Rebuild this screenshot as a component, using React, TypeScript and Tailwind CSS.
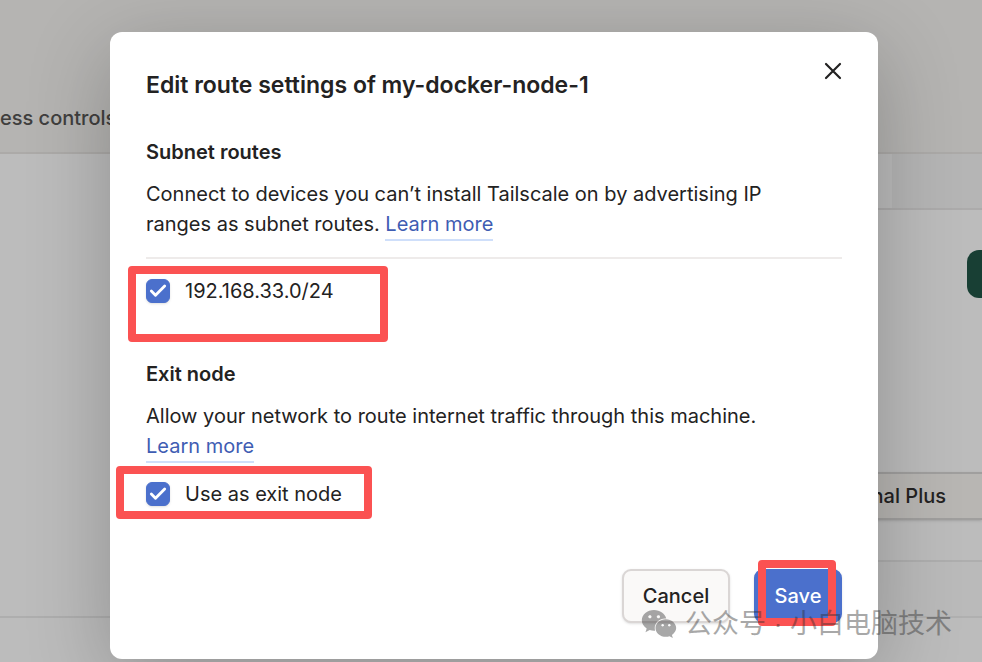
import type { ReactNode } from "react";
import { Check } from "lucide-react";
import { FaWeixin } from "react-icons/fa";

function Highlight({ className }: { className: string }) {
  return (
    <div
      aria-hidden="true"
      className={`pointer-events-none absolute rounded-[4px] border-8 border-[#fb5252] ${className}`}
    />
  );
}

function LearnMore() {
  return (
    <a
      href="#learn-more"
      className="border-b-2 border-[#cfdffa] pb-[3px] whitespace-nowrap text-[#3f5db3]"
    >
      Learn more
    </a>
  );
}

function CheckRow({ id, label, children }: { id: string; label: string; children: ReactNode }) {
  return (
    <div className="relative flex items-center leading-[30px]">
      <span className="relative flex size-6">
        <input
          id={id}
          type="checkbox"
          defaultChecked
          className="peer size-6 appearance-none rounded-[6px] border border-[#4b70cc] bg-white shadow-sm checked:bg-[#4b70cc]"
        />
        <Check
          className="pointer-events-none absolute inset-0 m-auto hidden size-5 text-white peer-checked:block"
          strokeWidth={3.4}
        />
      </span>
      <label htmlFor={id} className="pl-[15px]">
        {label}
      </label>
      {children}
    </div>
  );
}

function Backdrop() {
  return (
    <div className="flex min-h-screen flex-col bg-[#bcbcbc]">
      <header className="flex h-[154px] items-end border-b-2 border-[#acaaa8] bg-[#b5b4b2] pb-[19px]">
        <nav>
          <a href="#access" className="font-medium text-[#403f3e]">
            ess controls
          </a>
        </nav>
      </header>
      <main className="flex flex-1">
        <section className="flex-1">
          <div className="h-[464px] border-b-2 border-[#aeaeae]" />
        </section>
        <section className="flex flex-1 flex-col">
          <div className="flex h-14 justify-end border-b-2 border-[#acabab]">
            <div className="w-[90px] bg-[#b5b5b5]" />
          </div>
          <div className="flex h-[262px] justify-end pt-10">
            <button
              type="button"
              aria-label="Add"
              className="h-12 w-[15px] rounded-l-[12px] bg-[#183f34]"
            />
          </div>
          <div className="flex h-12 items-center justify-end border-y-2 border-[#a09f9e] bg-[#b8b6b3] pr-9 font-medium text-[#232222] shadow-sm">
            nal Plus
          </div>
          <div className="h-[42px] border-b-2 border-[#aeaeae]" />
          <div className="h-14 border-b-2 border-[#b0b0b0] bg-[#bababa]" />
        </section>
      </main>
    </div>
  );
}

function RouteDialog() {
  return (
    <div
      role="dialog"
      aria-labelledby="dialog-title"
      className="w-full max-w-3xl rounded-[12px] bg-white p-9 text-[#232222] shadow-[0_20px_84px_rgba(0,0,0,0.24)]"
    >
      <header className="flex items-start justify-between">
        <h1 id="dialog-title" className="pt-px text-[23px] leading-8 font-semibold">
          Edit route settings of my-docker-node-1
        </h1>
        <button type="button" aria-label="Close" className="-mt-2.5 -mr-1">
          <svg
            viewBox="0 0 26 26"
            className="size-[26px]"
            fill="none"
            stroke="#232222"
            strokeWidth="2.2"
            strokeLinecap="round"
          >
            <path d="M6 6 20 20M20 6 6 20" />
          </svg>
        </button>
      </header>

      <section className="pt-9">
        <h2 className="pb-3 font-semibold">Subnet routes</h2>
        <p className="pr-6">
          Connect to devices you can’t install Tailscale on by advertising IP ranges as subnet
          routes. <LearnMore />
        </p>
        <hr className="mt-[18px] mb-[17px] border-t-2 border-[#eeebea]" />
        <CheckRow id="subnet" label="192.168.33.0/24">
          <Highlight className="-top-[10px] -left-[18px] h-[76px] w-[260px]" />
        </CheckRow>
      </section>

      <section className="pt-[53px]">
        <h2 className="pb-3 font-semibold">Exit node</h2>
        <p className="pr-6">
          Allow your network to route internet traffic through this machine. <LearnMore />
        </p>
        <div className="pt-[18px]">
          <CheckRow id="exit-node" label="Use as exit node">
            <Highlight className="-top-[13px] -left-[30px] h-[53px] w-[256px]" />
          </CheckRow>
        </div>
      </section>

      <footer className="flex justify-end gap-6 pt-[60px] font-medium">
        <button
          type="button"
          className="h-[54px] min-w-[108px] rounded-[9px] border-2 border-[#dad6d5] bg-[#faf9f8] px-4 shadow-sm"
        >
          Cancel
        </button>
        <div className="relative">
          <button
            type="button"
            className="h-[54px] min-w-[88px] rounded-[9px] border-2 border-[#4b70cc] bg-[#4b70cc] px-4 text-white shadow-sm"
          >
            Save
          </button>
          <Highlight className="-top-[9px] left-1 h-[66px] w-[78px]" />
        </div>
      </footer>
    </div>
  );
}

export default function App() {
  return (
    <div className="relative min-h-screen overflow-hidden font-['Inter','Noto_Sans_CJK_SC',sans-serif] text-[20px] leading-[30px]">
      <Backdrop />
      <div className="absolute inset-0 flex items-start justify-center px-[104px] pt-8">
        <div className="flex w-full justify-center pl-[6px]">
          <RouteDialog />
        </div>
      </div>
      <div className="pointer-events-none absolute right-[30px] bottom-5 flex items-center gap-2 text-[27px] leading-9 text-[#282828] opacity-40">
        <FaWeixin className="size-9" />
        <span className="font-['Liberation_Sans','Noto_Sans_CJK_SC',sans-serif]">公众号 · 小白电脑技术</span>
      </div>
    </div>
  );
}
